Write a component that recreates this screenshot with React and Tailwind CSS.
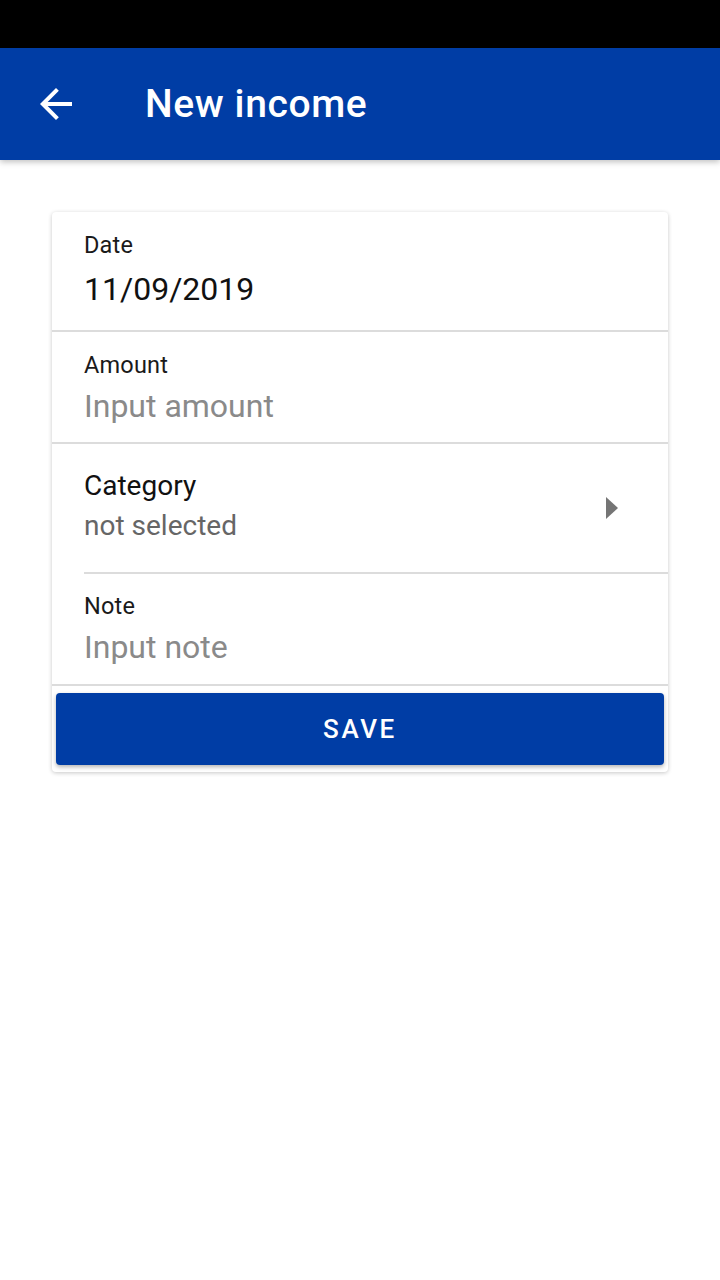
import React from "react";

const fieldLabel = "text-[23.5px] leading-[28px] tracking-[0.2px] text-[#1a1a1a]";
const placeholder = "text-[32px] leading-[38px] text-[#8a8a8a]";

const App = () => {
  return (
    <div className="w-[720px] min-h-[1280px] bg-white font-['Roboto',sans-serif]">
      <div className="h-12 bg-black" />
      <header className="h-[112px] bg-[#003da5] flex items-center shadow-[0_2px_6px_rgba(0,0,0,0.25)] relative">
        <button className="w-12 h-12 ml-8 flex items-center justify-center">
          <svg width="48" height="48" viewBox="0 0 24 24" fill="#ffffff">
            <path d="M20 11H7.83l5.59-5.59L12 4l-8 8 8 8 1.41-1.41L7.83 13H20v-2z" />
          </svg>
        </button>
        <h1 className="ml-[65px] text-[39px] font-medium text-white tracking-[0.6px]">
          New income
        </h1>
      </header>

      <main className="px-[52px] pt-[52px]">
        <div className="bg-white rounded-[4px] shadow-[0_1px_4px_rgba(0,0,0,0.22)]">
          <div className="h-[120px] pt-[19px] pl-8 border-b-2 border-[#dcdcdc]">
            <div className={fieldLabel}>Date</div>
            <div className="mt-[11px] text-[32px] leading-[38px] text-[#111111]">
              11/09/2019
            </div>
          </div>

          <div className="h-[112px] pt-[19px] pl-8 border-b-2 border-[#dcdcdc]">
            <div className={fieldLabel}>Amount</div>
            <div className={`mt-[8px] ${placeholder}`}>Input amount</div>
          </div>

          <div className="pl-8">
            <div className="h-[130px] flex items-center border-b-2 border-[#dcdcdc]">
              <div className="flex-1 self-start pt-[26px]">
                <div className="text-[28px] leading-[32px] text-[#111111]">Category</div>
                <div className="mt-2 text-[28px] leading-[32px] text-[#666666]">
                  not selected
                </div>
              </div>
              <svg width="12" height="22" viewBox="0 0 12 22" className="mr-[50px]">
                <path d="M0 0L12 11L0 22Z" fill="#757575" />
              </svg>
            </div>
          </div>

          <div className="h-[112px] pt-[18px] pl-8 border-b-2 border-[#dcdcdc]">
            <div className={fieldLabel}>Note</div>
            <div className={`mt-[8px] ${placeholder}`}>Input note</div>
          </div>

          <div className="px-1 pt-[7px] pb-[7px]">
            <button className="w-full h-[72px] rounded-[4px] bg-[#003da5] text-white text-[26px] font-medium tracking-[2.6px] shadow-[0_2px_4px_rgba(0,0,0,0.3)]">
              SAVE
            </button>
          </div>
        </div>
      </main>
    </div>
  );
};

export default App;
